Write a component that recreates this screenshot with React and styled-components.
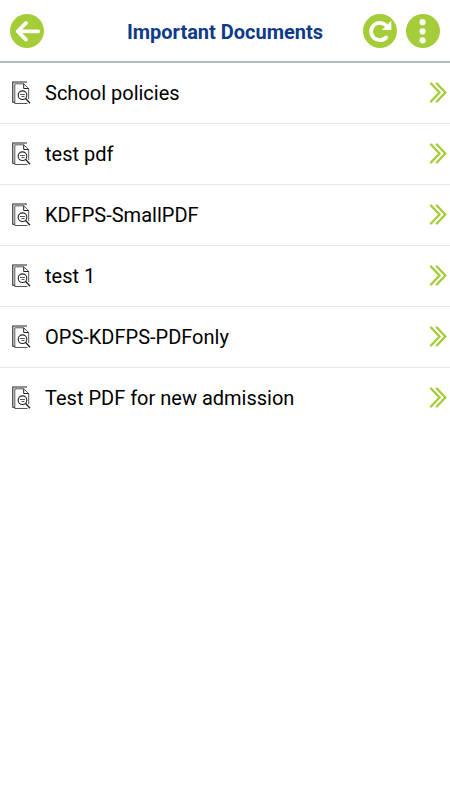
import React from "react";
import styled, { createGlobalStyle } from "styled-components";

const documents = [
  "School policies",
  "test pdf",
  "KDFPS-SmallPDF",
  "test 1",
  "OPS-KDFPS-PDFonly",
  "Test PDF for new admission",
];

function DocumentIcon() {
  return (
    <svg width="19" height="24" viewBox="0 0 19 24" fill="none" aria-hidden="true">
      {/* back sheet */}
      <path d="M15 1H0.8V21.3H3" stroke="#222" strokeWidth="1.1" />
      {/* front sheet with folded corner */}
      <path d="M16.7 18V7.5L11.7 2.8H2.8V22.5H15.5" stroke="#444" strokeWidth="0.9" />
      <path d="M11.7 2.8V7.5H16.7" stroke="#222" strokeWidth="1" />
      <circle cx="10.5" cy="14.2" r="4.3" stroke="#222" strokeWidth="1.1" />
      <path d="M8 13.5H13M9.5 15.5H12.5" stroke="#444" strokeWidth="0.9" />
      <path d="M13.7 17.5L18 22.3" stroke="#222" strokeWidth="1.3" />
    </svg>
  );
}

function DoubleChevron() {
  return (
    <svg width="18" height="22" viewBox="0 0 18 22" fill="none" aria-hidden="true">
      <path
        d="M2 1.5L10.5 10.5L2 19.5M7.8 1.5L16.3 10.5L7.8 19.5"
        stroke="#a4cd39"
        strokeWidth="2.4"
        strokeLinecap="round"
      />
    </svg>
  );
}

function App() {
  return (
    <>
      <GlobalStyle />
      <Header>
        <RoundButton aria-label="Back">
          <svg width="34" height="34" viewBox="0 0 34 34" fill="none">
            <path
              d="M28.2 17.3H8.2M16 9L7.8 17.3L16 25.6"
              stroke="#fff"
              strokeWidth="3.8"
              strokeLinecap="round"
              strokeLinejoin="round"
            />
          </svg>
        </RoundButton>
        <Title>Important Documents</Title>
        <Actions>
          <RoundButton aria-label="Refresh">
            <svg width="34" height="34" viewBox="0 0 34 34" fill="none">
              <path
                d="M22.8 11.2A8.7 8.7 0 1 0 23.2 23.4"
                stroke="#fff"
                strokeWidth="3.8"
                strokeLinecap="round"
              />
              <path d="M28.3 6.8V16H18.8Z" fill="#fff" />
            </svg>
          </RoundButton>
          <RoundButton aria-label="More options">
            <svg width="34" height="34" viewBox="0 0 34 34" fill="#fff">
              <circle cx="16.6" cy="8.2" r="3.1" />
              <circle cx="16.6" cy="17.3" r="3.1" />
              <circle cx="16.6" cy="26.3" r="3.1" />
            </svg>
          </RoundButton>
        </Actions>
      </Header>
      <List>
        {documents.map((name) => (
          <Item key={name}>
            <DocumentLink href="#">
              <DocumentIcon />
              <Name>{name}</Name>
              <DoubleChevron />
            </DocumentLink>
          </Item>
        ))}
      </List>
    </>
  );
}

const GlobalStyle = createGlobalStyle`
  * {
    box-sizing: border-box;
  }
  body {
    margin: 0;
    background: #fff;
    color: #000;
    font-family: Roboto, sans-serif;
  }
`;

const Header = styled.header`
  display: grid;
  grid-template-columns: 77px 1fr 77px;
  align-items: center;
  height: 63px;
  padding: 0 10px;
  border-bottom: 2px solid #b0bcc2;
`;

const Title = styled.h1`
  margin: 0;
  padding-top: 2px;
  color: #0f3a8a;
  font-size: 20px;
  font-weight: 700;
  line-height: 24px;
  text-align: center;
  white-space: nowrap;
`;

const Actions = styled.div`
  display: flex;
  justify-content: flex-end;
  gap: 9px;
`;

const RoundButton = styled.button`
  width: 34px;
  height: 34px;
  padding: 0;
  border: 0;
  border-radius: 50%;
  background: #a4cd39;
  cursor: pointer;

  > svg {
    display: block;
  }
`;

const List = styled.ul`
  margin: 0;
  padding: 0;
  list-style: none;
`;

const Item = styled.li`
  & + & {
    border-top: 1px solid #e6e6e6;
  }
`;

const DocumentLink = styled.a`
  display: flex;
  align-items: center;
  height: 60px;
  padding: 0 3px 0 12px;
  color: inherit;
  text-decoration: none;
`;

const Name = styled.span`
  flex: 1;
  margin-left: 14px;
  font-size: 20px;
  line-height: 24px;
`;

export default App;
